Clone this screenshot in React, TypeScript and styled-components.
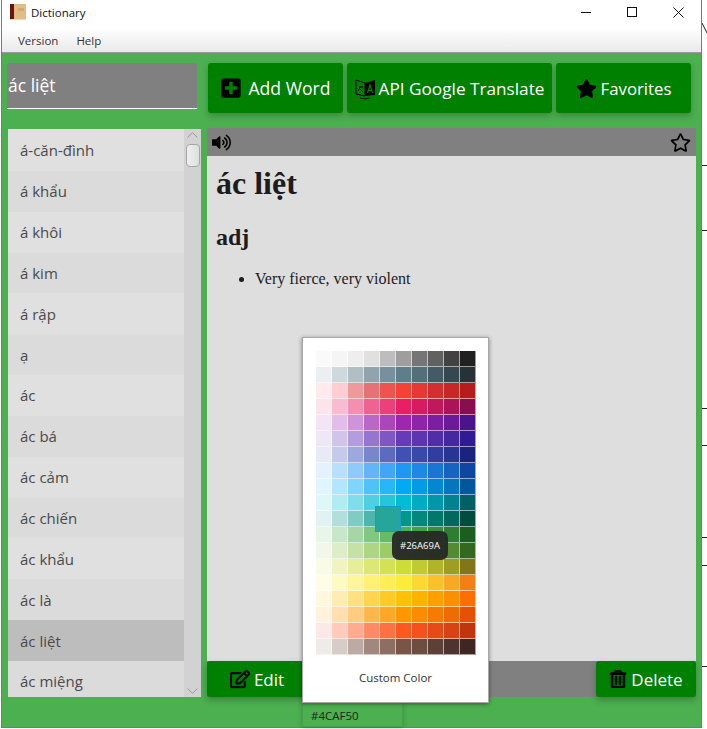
import React from 'react';
import styled, { createGlobalStyle } from 'styled-components';
import { FaPlusSquare, FaStar, FaRegStar, FaVolumeUp, FaRegEdit, FaRegTrashAlt } from 'react-icons/fa';

const GlobalStyle = createGlobalStyle`
  html, body { margin: 0; padding: 0; background: #fff; }
  body { font-family: "Open Sans", "Noto Sans", sans-serif; overflow: hidden; }
`;

const WORDS = [
  'á-căn-đình', 'á khẩu', 'á khôi', 'á kim', 'á rập', 'ạ', 'ác', 'ác bá', 'ác cảm',
  'ác chiến', 'ác khẩu', 'ác là', 'ác liệt', 'ác miệng',
];

const PALETTE = [
  ['FAFAFA', 'F5F5F5', 'EEEEEE', 'E0E0E0', 'BDBDBD', '9E9E9E', '757575', '616161', '424242', '212121'],
  ['ECEFF1', 'CFD8DC', 'B0BEC5', '90A4AE', '78909C', '607D8B', '546E7A', '455A64', '37474F', '263238'],
  ['FFEBEE', 'FFCDD2', 'EF9A9A', 'E57373', 'EF5350', 'F44336', 'E53935', 'D32F2F', 'C62828', 'B71C1C'],
  ['FCE4EC', 'F8BBD0', 'F48FB1', 'F06292', 'EC407A', 'E91E63', 'D81B60', 'C2185B', 'AD1457', '880E4F'],
  ['F3E5F5', 'E1BEE7', 'CE93D8', 'BA68C8', 'AB47BC', '9C27B0', '8E24AA', '7B1FA2', '6A1B9A', '4A148C'],
  ['EDE7F6', 'D1C4E9', 'B39DDB', '9575CD', '7E57C2', '673AB7', '5E35B1', '512DA8', '4527A0', '311B92'],
  ['E8EAF6', 'C5CAE9', '9FA8DA', '7986CB', '5C6BC0', '3F51B5', '3949AB', '303F9F', '283593', '1A237E'],
  ['E3F2FD', 'BBDEFB', '90CAF9', '64B5F6', '42A5F5', '2196F3', '1E88E5', '1976D2', '1565C0', '0D47A1'],
  ['E1F5FE', 'B3E5FC', '81D4FA', '4FC3F7', '29B6F6', '03A9F4', '039BE5', '0288D1', '0277BD', '01579B'],
  ['E0F7FA', 'B2EBF2', '80DEEA', '4DD0E1', '26C6DA', '00BCD4', '00ACC1', '0097A7', '00838F', '006064'],
  ['E0F2F1', 'B2DFDB', '80CBC4', '4DB6AC', '26A69A', '009688', '00897B', '00796B', '00695C', '004D40'],
  ['E8F5E9', 'C8E6C9', 'A5D6A7', '81C784', '66BB6A', '4CAF50', '43A047', '388E3C', '2E7D32', '1B5E20'],
  ['F1F8E9', 'DCEDC8', 'C5E1A5', 'AED581', '9CCC65', '8BC34A', '7CB342', '689F38', '558B2F', '33691E'],
  ['F9FBE7', 'F0F4C3', 'E6EE9C', 'DCE775', 'D4E157', 'CDDC39', 'C0CA33', 'AFB42B', '9E9D24', '827717'],
  ['FFFDE7', 'FFF9C4', 'FFF59D', 'FFF176', 'FFEE58', 'FFEB3B', 'FDD835', 'FBC02D', 'F9A825', 'F57F17'],
  ['FFF8E1', 'FFECB3', 'FFE082', 'FFD54F', 'FFCA28', 'FFC107', 'FFB300', 'FFA000', 'FF8F00', 'FF6F00'],
  ['FFF3E0', 'FFE0B2', 'FFCC80', 'FFB74D', 'FFA726', 'FF9800', 'FB8C00', 'F57C00', 'EF6C00', 'E65100'],
  ['FBE9E7', 'FFCCBC', 'FFAB91', 'FF8A65', 'FF7043', 'FF5722', 'F4511E', 'E64A19', 'D84315', 'BF360C'],
  ['EFEBE9', 'D7CCC8', 'BCAAA4', 'A1887F', '8D6E63', '795548', '6D4C41', '5D4037', '4E342E', '3E2723'],
];

// what shows of the window behind, to the right of this one
const TICK_GAPS = [131, 64, 177, 36, 91, 27, 100];

const Screen = styled.div`
  display: flex;
  width: 707px;
  height: 729px;
  overflow: hidden;
`;

const AppWindow = styled.div`
  display: flex;
  flex-direction: column;
  width: 702px;
  height: 728px;
  margin-left: 1px;
  box-sizing: border-box;
  border-left: 1px solid #7a7a7a;
  border-right: 1px solid #7a7a7a;
  border-bottom: 1px solid #7a7a7a;
`;

const BehindStrip = styled.div`
  display: flex;
  flex-direction: column;
  flex: 1;
`;

const BehindGlyph = styled.svg`
  margin-top: 23px;
  flex-shrink: 0;
`;

const Tick = styled.div<{ $gap: number }>`
  height: 1px;
  margin-top: ${p => p.$gap}px;
  background: #222;
`;

const TitleBar = styled.div`
  display: flex;
  align-items: center;
  height: 28px;
  flex-shrink: 0;
  padding: 0 0 4px 8px;
  box-sizing: border-box;
  background: #fff;
`;

const TitleText = styled.span`
  margin: 1px 0 0 5px;
  font-size: 11.5px;
  color: #111;
`;

const WindowButtons = styled.div`
  display: flex;
  margin-left: auto;
`;

const WindowButton = styled.div`
  display: flex;
  align-items: center;
  justify-content: center;
  width: 46px;
  height: 24px;
`;

const MenuBar = styled.div`
  display: flex;
  gap: 18px;
  align-items: center;
  height: 25px;
  flex-shrink: 0;
  padding: 1px 0 0 16px;
  box-sizing: border-box;
  border-bottom: 1px solid #9a9a9a;
  background: linear-gradient(#fff, #e9e9e9);
  font-size: 11.5px;
  color: #333;
`;

const Body = styled.div`
  position: relative;
  flex: 1;
  min-height: 0;
  padding: 10px 5px 0 5px;
  background: #4caf50;
`;

const Toolbar = styled.div`
  display: flex;
  height: 50px;
`;

const SearchField = styled.div`
  display: flex;
  align-items: center;
  width: 190px;
  height: 46px;
  margin-right: 11px;
  box-sizing: border-box;
  border-bottom: 1px solid #fff;
  border-radius: 3px 3px 0 0;
  background: #808080;
  padding: 0 1px 2px;
  font-size: 17.5px;
  color: #fff;
`;

const GreenButton = styled.div<{ $w: number; $gap: number; $size: number }>`
  display: flex;
  align-items: center;
  justify-content: center;
  gap: ${p => p.$gap}px;
  width: ${p => p.$w}px;
  height: 50px;
  border-radius: 3px;
  background: #008000;
  box-shadow: 0 3px 6px rgba(0, 0, 0, 0.22);
  font-size: ${p => p.$size}px;
  color: #fff;
  & + & { margin-left: 4px; }
`;

const Columns = styled.div`
  display: flex;
  margin-top: 15px;
  height: 569px;
`;

const WordList = styled.div`
  display: flex;
  width: 193px;
  height: 568px;
  margin: 1px 6px 0 1px;
  overflow: hidden;
`;

const Rows = styled.div`
  flex: 1;
  overflow: hidden;
  padding-top: 1px;
  background: #e0e0e0;
`;

const WordRow = styled.div<{ $alt: boolean; $selected: boolean }>`
  display: flex;
  align-items: center;
  height: 40.85px;
  padding-left: 12px;
  background: ${p => (p.$selected ? '#bdbdbd' : p.$alt ? '#dbdbdb' : '#e0e0e0')};
  font-size: 15px;
  color: #4a4a4a;
`;

const ScrollBar = styled.div`
  display: flex;
  flex-direction: column;
  align-items: center;
  width: 17px;
  background: #d2d2d2;
`;

const ScrollThumb = styled.div`
  width: 14px;
  height: 23px;
  margin-top: 6px;
  box-sizing: border-box;
  border: 1px solid #a6a6a6;
  border-radius: 4px;
  background: linear-gradient(90deg, #efefef, #dedede);
`;

const ScrollArrow = styled.svg<{ $bottom?: boolean }>`
  margin-top: ${p => (p.$bottom ? 'auto' : '3px')};
  margin-bottom: ${p => (p.$bottom ? '3px' : '0')};
  flex-shrink: 0;
`;

const DefinitionPanel = styled.div`
  display: flex;
  flex-direction: column;
  flex: 1;
`;

const PanelHeader = styled.div`
  display: flex;
  align-items: center;
  justify-content: space-between;
  height: 28px;
  flex-shrink: 0;
  padding: 0 5px;
  background: #808080;
  color: #000;
`;

const Definition = styled.div`
  flex: 1;
  padding: 11px 9px;
  background: #dedede;
  font-family: "Liberation Serif", "Times New Roman", serif;
  color: #1c1c1c;
`;

const WordTitle = styled.h1`
  margin: 0;
  font-size: 32px;
  line-height: 32px;
`;

const WordClass = styled.h3`
  margin: 24px 0 0;
  font-size: 24px;
  line-height: 28px;
`;

const Meanings = styled.ul`
  margin: 19px 0 0;
  padding-left: 39px;
  font-size: 16px;
  line-height: 18px;
`;

const PanelFooter = styled.div`
  display: flex;
  justify-content: space-between;
  height: 36px;
  flex-shrink: 0;
  background: #808080;
`;

const FooterButton = styled.div<{ $w: number }>`
  display: flex;
  align-items: center;
  justify-content: center;
  gap: 4px;
  width: ${p => p.$w}px;
  border-radius: 3px;
  background: #008000;
  box-shadow: 0 3px 6px rgba(0, 0, 0, 0.25);
  font-size: 17px;
  color: #fff;
`;

const ColorChip = styled.div`
  position: absolute;
  left: 300px;
  top: 649px;
  width: 101px;
  height: 25px;
  padding: 5px 0 0 8px;
  box-sizing: border-box;
  border: 1px solid #47a04b;
  border-radius: 2px;
  box-shadow: 0 2px 5px rgba(0, 0, 0, 0.2);
  font-size: 11.5px;
  color: #222;
`;

const ColorPopup = styled.div`
  position: absolute;
  left: 300px;
  top: 284px;
  width: 187px;
  height: 366px;
  padding: 13px 13px 0 13px;
  box-sizing: border-box;
  background: #fff;
  border: 1px solid #a8a8a8;
  box-shadow: 0 1px 4px rgba(0, 0, 0, 0.45);
`;

const Swatches = styled.div`
  display: grid;
  grid-template-columns: repeat(10, 16px);
  grid-auto-rows: 16px;
`;

const Swatch = styled.div<{ $hex: string }>`
  position: relative;
  background: #${p => p.$hex};
  box-shadow: inset -1px -1px 0 rgba(255, 255, 255, 0.55);
`;

const SwatchHover = styled.div<{ $hex: string }>`
  position: absolute;
  left: -5px;
  top: -5px;
  width: 26px;
  height: 26px;
  box-sizing: border-box;
  border: 1px solid #129fc4;
  background: #${p => p.$hex};
  z-index: 2;
`;

const SwatchTooltip = styled.div`
  position: absolute;
  left: 12px;
  top: 20px;
  width: 56px;
  height: 29px;
  display: flex;
  align-items: center;
  justify-content: center;
  border-radius: 7px;
  background: rgba(38, 42, 38, 0.96);
  font-size: 9.5px;
  color: #fff;
  z-index: 3;
`;

const CustomColor = styled.div`
  margin-top: 15px;
  text-align: center;
  font-size: 11.5px;
  color: #333;
`;

const BookIcon = () => (
  <svg width="16" height="16" viewBox="0 0 16 16">
    <rect x="0" y="0" width="16" height="16" fill="#e1bd84" />
    <rect x="0" y="0" width="4" height="15" fill="#6b1410" />
    <rect x="8" y="4" width="6" height="3" fill="#d3a971" />
    <rect x="1" y="15" width="15" height="1" fill="#eed9b4" />
  </svg>
);

const TranslateIcon = () => (
  <svg width="21" height="23" viewBox="0 0 21 23">
    <path d="M1 3 L10 6 V19 L1 17 Z" fill="none" stroke="#000" strokeWidth="1" />
    <path d="M10 6 L20 3 V18 L10 19 Z" fill="#000" />
    <path d="M3 14 L6 9 M4 10 H8 M5 12 L8 15" fill="none" stroke="#000" strokeWidth="1" />
    <path d="M12.5 16 L15 8 L17.5 16 M13.5 13.5 H16.5" fill="none" stroke="#008000" strokeWidth="1.2" />
    <path d="M5 21 Q10 23 15 21" fill="none" stroke="#000" strokeWidth="1" />
  </svg>
);

const App: React.FC = () => (
  <Screen>
    <GlobalStyle />
    <AppWindow>
      <TitleBar>
        <BookIcon />
        <TitleText>Dictionary</TitleText>
        <WindowButtons>
          <WindowButton>
            <svg width="10" height="10" viewBox="0 0 10 10">
              <path d="M0 5.5 H10" stroke="#111" strokeWidth="1" />
            </svg>
          </WindowButton>
          <WindowButton>
            <svg width="10" height="10" viewBox="0 0 10 10">
              <rect x="0.5" y="0.5" width="9" height="9" fill="none" stroke="#111" />
            </svg>
          </WindowButton>
          <WindowButton>
            <svg width="11" height="11" viewBox="0 0 11 11">
              <path d="M0.5 0.5 L10.5 10.5 M10.5 0.5 L0.5 10.5" stroke="#111" strokeWidth="1" />
            </svg>
          </WindowButton>
        </WindowButtons>
      </TitleBar>
      <MenuBar>
        <span>Version</span>
        <span>Help</span>
      </MenuBar>
      <Body>
        <Toolbar>
          <SearchField>ác liệt</SearchField>
          <GreenButton $w={135} $gap={6} $size={17.6}>
            <FaPlusSquare size={22} color="#000" />
            Add Word
          </GreenButton>
          <GreenButton $w={205} $gap={3} $size={17.2}>
            <TranslateIcon />
            API Google Translate
          </GreenButton>
          <GreenButton $w={135} $gap={4} $size={16.8}>
            <FaStar size={21} color="#000" />
            Favorites
          </GreenButton>
        </Toolbar>
        <Columns>
          <WordList>
            <Rows>
              {WORDS.map((word, i) => (
                <WordRow key={word} $alt={i % 2 === 1} $selected={word === 'ác liệt'}>
                  {word}
                </WordRow>
              ))}
            </Rows>
            <ScrollBar>
              <ScrollArrow width="11" height="6" viewBox="0 0 11 6">
                <path d="M0.5 5.5 L5.5 0.7 L10.5 5.5" fill="none" stroke="#9a9a9a" strokeWidth="1" />
              </ScrollArrow>
              <ScrollThumb />
              <ScrollArrow $bottom width="11" height="6" viewBox="0 0 11 6">
                <path d="M0.5 0.5 L5.5 5.3 L10.5 0.5" fill="none" stroke="#9a9a9a" strokeWidth="1" />
              </ScrollArrow>
            </ScrollBar>
          </WordList>
          <DefinitionPanel>
            <PanelHeader>
              <FaVolumeUp size={19} />
              <FaRegStar size={21} />
            </PanelHeader>
            <Definition>
              <WordTitle>ác liệt</WordTitle>
              <WordClass>adj</WordClass>
              <Meanings>
                <li>Very fierce, very violent</li>
              </Meanings>
            </Definition>
            <PanelFooter>
              <FooterButton $w={100}>
                <FaRegEdit size={20} color="#000" stroke="#000" strokeWidth={12} />
                Edit
              </FooterButton>
              <FooterButton $w={100}>
                <FaRegTrashAlt size={18} color="#000" stroke="#000" strokeWidth={24} />
                Delete
              </FooterButton>
            </PanelFooter>
          </DefinitionPanel>
        </Columns>
        <ColorChip>#4CAF50</ColorChip>
        <ColorPopup>
          <Swatches>
            {PALETTE.flatMap((row, r) =>
              row.map((hex, c) => (
                <Swatch key={`${r}-${c}`} $hex={hex}>
                  {hex === '26A69A' && (
                    <>
                      <SwatchHover $hex={hex} />
                      <SwatchTooltip>#26A69A</SwatchTooltip>
                    </>
                  )}
                </Swatch>
              )),
            )}
          </Swatches>
          <CustomColor>Custom Color</CustomColor>
        </ColorPopup>
      </Body>
    </AppWindow>
    <BehindStrip>
      <BehindGlyph width="5" height="11" viewBox="0 0 5 11">
        <path d="M0 0 L5 10" stroke="#222" strokeWidth="1" />
      </BehindGlyph>
      {TICK_GAPS.map((gap, i) => (
        <Tick key={i} $gap={gap} />
      ))}
    </BehindStrip>
  </Screen>
);

export default App;
